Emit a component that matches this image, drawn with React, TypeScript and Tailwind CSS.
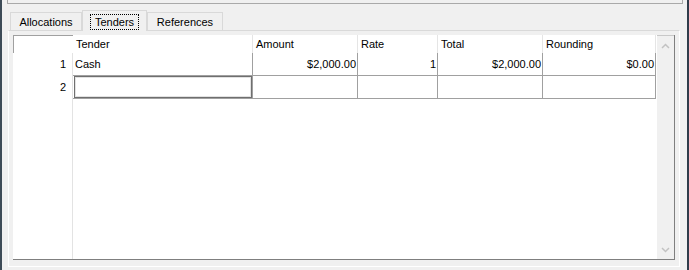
import type { ReactNode } from 'react'

const font = { fontFamily: '"Liberation Sans", Arial, sans-serif' }

type Col = { key: string; label: string; width: string; align: 'left' | 'right' }

const columns: Col[] = [
  { key: 'tender', label: 'Tender', width: 'w-[180px]', align: 'left' },
  { key: 'amount', label: 'Amount', width: 'w-[105px]', align: 'right' },
  { key: 'rate', label: 'Rate', width: 'w-[80px]', align: 'right' },
  { key: 'total', label: 'Total', width: 'w-[105px]', align: 'right' },
  { key: 'rounding', label: 'Rounding', width: 'w-[113px]', align: 'right' },
]

const rows: Record<string, string>[] = [
  { tender: 'Cash', amount: '$2,000.00', rate: '1', total: '$2,000.00', rounding: '$0.00' },
  { tender: '', amount: '', rate: '', total: '', rounding: '' },
]

function Tab({ label, selected, width }: { label: string; selected?: boolean; width: string }) {
  if (selected) {
    return (
      <div
        className={`${width} relative z-10 -mb-px flex h-[21px] items-start justify-center border-x border-t border-[#d9d9d9] bg-[#f0f0f0] pt-[3px]`}
      >
        <span className="border border-dotted border-black px-[4px] leading-[14px]">{label}</span>
      </div>
    )
  }
  return (
    <div
      className={`${width} flex h-[18px] items-center justify-center border-x border-t border-[#d9d9d9] bg-[#f0f0f0] pt-[2px]`}
    >
      {label}
    </div>
  )
}

function Chevron({ up }: { up?: boolean }) {
  return (
    <svg width="9" height="6" viewBox="0 0 9 6" className="block">
      <path
        d={up ? 'M1 5 L4.5 1.5 L8 5' : 'M1 1 L4.5 4.5 L8 1'}
        fill="none"
        stroke="#c2c2c2"
        strokeWidth="1.5"
      />
    </svg>
  )
}

function Cell({ children, col, focused }: { children?: ReactNode; col: Col; focused?: boolean }) {
  return (
    <div
      className={`${col.width} relative h-[23px] shrink-0 border-b border-r border-[#a0a0a0] leading-[22px] ${
        col.align === 'right' ? 'pr-[1px] text-right' : 'pl-[2px] text-left'
      }`}
    >
      {focused && (
        <div className="absolute bottom-0 left-[1px] right-0 top-0 border border-[#6f6f6f] shadow-[inset_0_0_0_1px_#e2e2e2]" />
      )}
      {children}
    </div>
  )
}

export default function App() {
  return (
    <div className="flex h-[270px] w-[689px] overflow-hidden bg-[#f0f0f0] text-[11px] text-black" style={font}>
      <div className="w-[2px] bg-[#3d4b57]" />

      <div className="flex w-[685px] flex-col">
        <div className="ml-[5px] h-[4px] w-[676px] border-x border-b border-[#a9a9a9]" />

        <div className="ml-[8px] mt-[6px] flex h-[20px] items-end">
          <Tab label="Allocations" width="w-[72px]" />
          <Tab label="Tenders" width="w-[65px]" selected />
          <Tab label="References" width="w-[76px]" />
        </div>

        <div className="ml-[6px] h-[237px] w-[672px] border-x border-b border-t border-b-white border-l-white border-r-white border-t-[#d9d9d9] pl-[4px] pt-[4px]">
          <div className="flex h-[225px] w-[662px] border-b border-r border-[#7f7f7f] bg-white">
            <div className="flex w-[644px]">
              <div className="flex w-[60px] flex-col">
                <div className="h-[18px] border-l border-t border-[#a0a0a0]" />
                <div className="flex-1 border-r border-[#e3e3e3]">
                  {rows.map((_, i) => (
                    <div key={i} className="h-[23px] pr-[6px] text-right leading-[22px]">
                      {i + 1}
                    </div>
                  ))}
                </div>
              </div>

              <div className="flex flex-col">
                <div className="flex h-[18px]">
                  {columns.map((col) => (
                    <div
                      key={col.key}
                      className={`${col.width} shrink-0 border-r border-[#e5e5e5] pl-[3px] leading-[18px]`}
                    >
                      {col.label}
                    </div>
                  ))}
                </div>
                {rows.map((row, i) => (
                  <div key={i} className="flex">
                    {columns.map((col) => (
                      <Cell key={col.key} col={col} focused={i === 1 && col.key === 'tender'}>
                        {row[col.key]}
                      </Cell>
                    ))}
                  </div>
                ))}
              </div>
            </div>

            <div className="flex w-[17px] flex-col items-center justify-between border-t border-[#c8c8c8] bg-[#f0f0f0] pb-[6px] pt-[7px]">
              <Chevron up />
              <Chevron />
            </div>
          </div>
        </div>
      </div>

      <div className="w-[2px] bg-[#2f3b4a]" />
    </div>
  )
}
